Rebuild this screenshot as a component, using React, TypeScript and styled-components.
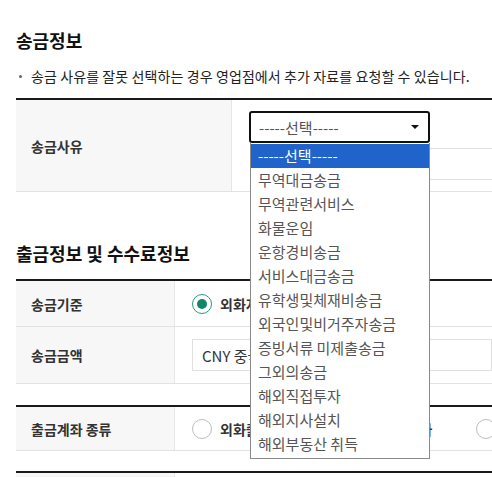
import styled, { createGlobalStyle } from "styled-components";

const GlobalStyle = createGlobalStyle`
  html, body {
    margin: 0;
    padding: 0;
    overflow: hidden;
    background: #fff;
  }
  body {
    font-family: "Noto Sans CJK KR", "Noto Sans", sans-serif;
    color: #222;
  }
`;

const Page = styled.div`
  width: 640px;
  padding: 28px 0 0 16px;
`;

const SectionTitle = styled.h2<{ $top?: number }>`
  margin: ${(p) => p.$top ?? 0}px 0 0;
  font-size: 18px;
  font-weight: 700;
  line-height: 24px;
  color: #111;
`;

const Note = styled.p`
  margin: 14px 0 0;
  padding-left: 15px;
  position: relative;
  font-size: 14px;
  line-height: 20px;
  letter-spacing: 0.1px;
  color: #222;
  white-space: nowrap;
  &::before {
    content: "";
    position: absolute;
    left: 3px;
    top: 9px;
    width: 3px;
    height: 3px;
    border-radius: 50%;
    background: #666;
  }
`;

const Table = styled.div<{ $top: number }>`
  margin-top: ${(p) => p.$top}px;
  border-top: 2px solid #1a1a1a;
`;

const Row = styled.div<{ $label: number; $height: number }>`
  display: grid;
  grid-template-columns: ${(p) => p.$label}px 1fr;
  min-height: ${(p) => p.$height}px;
  border-bottom: 1px solid #e2e2e2;
`;

const Label = styled.div`
  display: flex;
  align-items: center;
  padding-left: 15px;
  background: #f7f7f7;
  border-right: 1px solid #e6e6e6;
  font-size: 14px;
  font-weight: 600;
  color: #333;
  white-space: nowrap;
`;

const Cell = styled.div<{ $pad: string }>`
  display: flex;
  flex-direction: column;
  justify-content: center;
  padding: ${(p) => p.$pad};
  gap: 5px;
`;

const SelectWrap = styled.div`
  position: relative;
  width: 181px;
`;

const SelectBox = styled.div`
  box-sizing: border-box;
  height: 32px;
  border: 2px solid #111;
  border-radius: 3px;
  display: flex;
  align-items: center;
  justify-content: space-between;
  padding: 0 9px 0 8px;
  font-size: 15px;
  color: #555;
  background: #fff;
`;

const Caret = styled.span`
  width: 0;
  height: 0;
  border-left: 4px solid transparent;
  border-right: 4px solid transparent;
  border-top: 4px solid #111;
`;

const Options = styled.ul`
  position: absolute;
  top: 32px;
  left: 1px;
  width: 180px;
  box-sizing: border-box;
  margin: 0;
  padding: 1px 0 2px;
  list-style: none;
  background: #fff;
  border: 1px solid #8a8a8a;
  border-top: none;
  z-index: 10;
`;

const Option = styled.li<{ $active?: boolean }>`
  height: 24px;
  line-height: 24px;
  padding-left: 7px;
  font-size: 15px;
  color: ${(p) => (p.$active ? "#fff" : "#555")};
  background: ${(p) => (p.$active ? "#1f63cb" : "transparent")};
  white-space: nowrap;
`;

const TextBox = styled.div<{ $width: number; $left?: number }>`
  box-sizing: border-box;
  width: ${(p) => p.$width}px;
  margin-left: ${(p) => p.$left ?? 0}px;
  height: 32px;
  border: 1px solid #e0e0e0;
  display: flex;
  align-items: center;
  padding-left: 9px;
  font-size: 15px;
  color: #333;
`;

const RadioGroup = styled.div`
  display: flex;
  align-items: center;
`;

const RadioItem = styled.label<{ $width: number }>`
  display: flex;
  align-items: center;
  gap: 8px;
  width: ${(p) => p.$width}px;
  font-size: 14px;
  font-weight: 600;
  color: #333;
  white-space: nowrap;
  overflow: hidden;
`;

const Radio = styled.span<{ $checked?: boolean }>`
  box-sizing: border-box;
  flex: none;
  width: 20px;
  height: 20px;
  border-radius: 50%;
  border: 1px solid ${(p) => (p.$checked ? "#2a9a7c" : "#bdbdbd")};
  display: flex;
  align-items: center;
  justify-content: center;
  background: #fff;
  &::after {
    content: "";
    width: 10px;
    height: 10px;
    border-radius: 50%;
    background: ${(p) => (p.$checked ? "#12866a" : "transparent")};
  }
`;

const reasons = [
  "무역대금송금",
  "무역관련서비스",
  "화물운임",
  "운항경비송금",
  "서비스대금송금",
  "유학생및체재비송금",
  "외국인및비거주자송금",
  "증빙서류 미제출송금",
  "그외의송금",
  "해외직접투자",
  "해외지사설치",
  "해외부동산 취득",
];

export default function App() {
  return (
    <>
      <GlobalStyle />
      <Page>
        <SectionTitle>송금정보</SectionTitle>
        <Note>송금 사유를 잘못 선택하는 경우 영업점에서 추가 자료를 요청할 수 있습니다.</Note>
        <Table $top={12}>
          <Row $label={216} $height={91}>
            <Label>송금사유</Label>
            <Cell $pad="11px 0 11px 17px">
              <SelectWrap>
                <SelectBox>
                  -----선택-----
                  <Caret />
                </SelectBox>
                <Options>
                  <Option $active>-----선택-----</Option>
                  {reasons.map((r) => (
                    <Option key={r}>{r}</Option>
                  ))}
                </Options>
              </SelectWrap>
              <TextBox $width={300} $left={12} />
            </Cell>
          </Row>
        </Table>

        <SectionTitle $top={49}>출금정보 및 수수료정보</SectionTitle>
        <Table $top={14}>
          <Row $label={159} $height={45}>
            <Label>송금기준</Label>
            <Cell $pad="0 0 0 17px">
              <RadioGroup>
                <RadioItem $width={200}>
                  <Radio $checked />
                  외화지급
                </RadioItem>
              </RadioGroup>
            </Cell>
          </Row>
          <Row $label={159} $height={56}>
            <Label>송금금액</Label>
            <Cell $pad="0 0 0 17px">
              <TextBox $width={300}>CNY 중국 위안</TextBox>
            </Cell>
          </Row>
        </Table>

        <Table $top={21}>
          <Row $label={159} $height={43}>
            <Label>출금계좌 종류</Label>
            <Cell $pad="0 0 0 17px">
              <RadioGroup>
                <RadioItem $width={284}>
                  <Radio />
                  외화출금계좌 외화보통예금 통합계좌
                </RadioItem>
                <RadioItem $width={120}>
                  <Radio />
                  원화계좌
                </RadioItem>
              </RadioGroup>
            </Cell>
          </Row>
        </Table>

        <Table $top={20}>
          <Row $label={159} $height={44}>
            <Label>수수료 출금계좌</Label>
            <Cell $pad="0 0 0 17px" />
          </Row>
        </Table>
      </Page>
    </>
  );
}
